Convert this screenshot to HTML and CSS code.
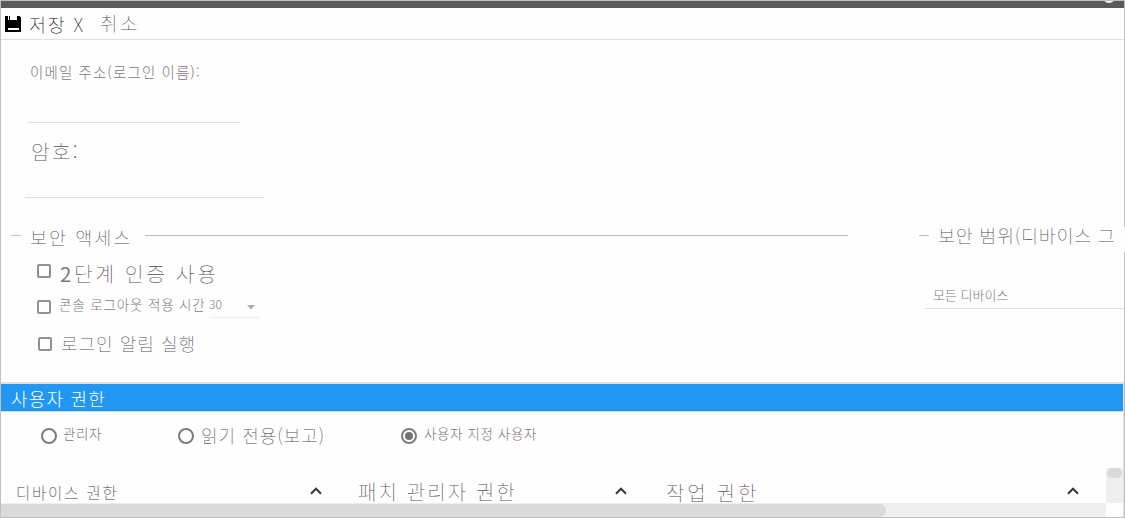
FILE: index.html
```html
<!DOCTYPE html>
<html lang="ko">
<head>
<meta charset="utf-8">
<title>사용자 권한</title>
<link rel="stylesheet" href="styles.css">
</head>
<body>
<div class="window">
  <header class="titlebar"><span class="avatar"></span></header>
  <nav class="toolbar">
    <svg class="save-icon" width="16" height="16" viewBox="0 0 16 16" shape-rendering="crispEdges"><path fill="#000" d="M0 0h3v4h9V0h2l2 2v14H0z"/><path fill="#000" d="M4 0h1v4H4z"/><path fill="#fff" d="M3 12h11v2H3z"/></svg>
    <span class="text save">저장 X</span>
    <span class="text cancel">취소</span>
  </nav>
  <section class="account">
    <div class="field email"><label class="text">이메일 주소(로그인 이름):</label></div>
    <div class="field password"><label class="text">암호:</label></div>
  </section>
  <section class="security">
    <div class="access">
      <div class="legend"><span class="text">보안 액세스</span></div>
      <div class="option two-step"><i class="checkbox"></i><span class="text"><b>2</b>단계 인증 사용</span></div>
      <div class="option logout"><i class="checkbox"></i><span class="text">콘솔 로그아웃 적용 시간</span>
        <div class="select"><span class="text">30</span><svg width="8" height="5" viewBox="0 0 8 5"><path fill="#adadad" d="M0 0h8L4 4.5z"/></svg></div>
      </div>
      <div class="option notify"><i class="checkbox"></i><span class="text">로그인 알림 실행</span></div>
    </div>
    <div class="scope">
      <div class="legend"><span class="text">보안 범위(디바이스 그</span></div>
      <div class="device-select"><span class="text">모든 디바이스</span></div>
    </div>
  </section>
  <section class="permissions">
    <h2 class="banner"><span class="text">사용자 권한</span></h2>
    <div class="roles">
      <div class="role admin"><i class="radio"></i><span class="text">관리자</span></div>
      <div class="role reader"><i class="radio"></i><span class="text">읽기 전용(보고)</span></div>
      <div class="role custom"><i class="radio checked"></i><span class="text">사용자 지정 사용자</span></div>
    </div>
    <div class="panels">
      <div class="panel device"><span class="text">디바이스 권한</span><svg class="chevron" width="12" height="8" viewBox="0 0 12 8"><path d="M1 6.7 6 1.7l5 5"/></svg></div>
      <div class="panel patch"><span class="text">패치 관리자 권한</span><svg class="chevron" width="12" height="8" viewBox="0 0 12 8"><path d="M1 6.7 6 1.7l5 5"/></svg></div>
      <div class="panel job"><span class="text">작업 권한</span><svg class="chevron" width="12" height="8" viewBox="0 0 12 8"><path d="M1 6.7 6 1.7l5 5"/></svg></div>
      <div class="vscroll"><i></i></div>
    </div>
    <div class="hscroll"><i></i></div>
  </section>
</div>
</body>
</html>
```
FILE: styles.css
```css
* { box-sizing: border-box; }
body { margin: 0; background: #fff; }
.window {
  position: relative;
  width: 1125px;
  height: 518px;
  border: 1px solid #c0c0c0;
  background: #fefefe;
  overflow: hidden;
  overflow: clip;
  overflow-clip-margin: 1px;
  color: #544d54;
}
/* Gap in the frame beside the scope heading */
.window::after {
  content: "";
  position: absolute;
  top: 226px;
  right: -1px;
  width: 1px;
  height: 25px;
  background: #fefefe;
}
.text {
  display: block;
  flex: none;
  font-family: "Noto Sans CJK KR", sans-serif;
  font-weight: 100;
  line-height: 20px;
  white-space: nowrap;
}
.text b { font-weight: 400; color: #7d767d; }

.titlebar { height: 7px; background: #5a5a5a; overflow: hidden; display: flex; justify-content: flex-end; padding-right: 8px; }
.avatar { width: 14px; height: 14px; margin-top: -12px; border: 2px solid #eee; border-radius: 50%; background: #999; }

.toolbar { display: flex; height: 32px; padding: 6px 0 0 4px; border-bottom: 1px solid #e0e0e0; }
.save-icon { flex: none; margin-top: 2px; }
.save { width: 71px; padding-left: 8px; font-size: 18.5px; letter-spacing: 1.8px; color: #000; }
.cancel { margin: -1px 0 0 8px; font-size: 19px; letter-spacing: 2.6px; }

.account { height: 185px; padding-top: 22px; }
.field { display: flex; align-items: flex-start; border-bottom: 1px solid #e0e0e0; }
.email { width: 212px; height: 61px; margin-left: 27px; padding-left: 2px; font-size: 14.5px; letter-spacing: 1.1px; }
.password { width: 239px; height: 75px; margin-left: 24px; padding: 18px 0 0 6px; font-size: 20.5px; letter-spacing: 2px; }

.security { display: flex; height: 157px; }
.legend { display: flex; align-items: center; height: 20px; }
.legend::before { content: ""; flex: none; width: 10px; height: 1px; background: #bdbdbd; }
.access { width: 838px; margin-left: 10px; }
.access .legend::after { content: ""; flex: none; width: 703px; height: 1px; margin-left: auto; background: #bdbdbd; }
.access .legend .text { margin: 3px 0 0 9px; font-size: 18.5px; letter-spacing: 2px; }
.option { display: flex; }
.checkbox { flex: none; width: 14px; height: 14px; border: 2px solid #919191; border-radius: 2px; }
.two-step { height: 37px; padding: 19px 0 0 26px; font-size: 20.5px; letter-spacing: 2.5px; }
.two-step .text { margin: -1px 0 0 9px; }
.logout { height: 36px; padding: 18px 0 0 26px; font-size: 13.5px; letter-spacing: .85px; }
.logout > .text { width: 149px; margin: -6px 0 0 8px; }
.select { display: flex; justify-content: space-between; width: 50px; height: 25px; margin: -7px 0 0 2px; border-bottom: 1px solid #eee; }
.select .text { margin: 1px 0 0 -1px; font-size: 12px; letter-spacing: 0; }
.select svg { margin: 12px 5px 0 0; }
.notify { padding: 19px 0 0 27px; font-size: 18px; letter-spacing: 1px; }
.notify .text { margin: -4px 0 0 9px; }
.scope { width: 205px; margin-left: 71px; }
.scope .legend .text { margin-left: 9px; font-size: 18.5px; letter-spacing: .7px; }
.device-select { width: 199px; height: 24px; margin: 40px 0 0 6px; padding-left: 8px; border-bottom: 1px solid #e0e0e0; font-size: 13px; }

.email .text, .logout .text, .device-select .text, .admin .text, .custom .text, .device .text { font-weight: 300; color: #7d767d; }

.permissions { border-top: 2px solid #e0e0e0; border-right: 1px solid #e0e0e0; }
.banner { height: 28px; margin: 0; padding: 4px 0 0 10px; border-bottom: 1px solid #d9dde0; background: #2196f3; color: #fff; font-size: 18px; letter-spacing: 1.2px; }
.banner .text { font-weight: 300; }
.roles { display: grid; grid-template-columns: 137px 223px 1fr; height: 56px; padding: 12px 0 0 40px; }
.role { display: flex; }
.radio { display: grid; place-items: center; flex: none; width: 16px; height: 16px; margin-top: 4px; border: 2px solid #7c7c7c; border-radius: 50%; }
.radio.checked::after { content: ""; width: 8px; height: 8px; border-radius: 50%; background: #747474; }
.role .text { margin-left: 6px; }
.admin, .custom { font-size: 13.5px; letter-spacing: .6px; }
.admin .text { margin-top: -1px; }
.custom .text { margin: -1px 0 0 7px; }
.reader { font-size: 18px; letter-spacing: 1px; }
.reader .text { margin: 1px 0 0 7px; }

.panels { display: grid; grid-template-columns: 321px 305px 452px 27px 17px; height: 35px; }
.panel { display: flex; justify-content: space-between; padding-top: 14px; }
.chevron { flex: none; margin-top: 5px; fill: none; stroke: #383838; stroke-width: 2; }
.device { padding-left: 15px; font-size: 15.5px; letter-spacing: 1.8px; }
.patch { padding-left: 36px; font-size: 20px; letter-spacing: 2.1px; }
.job { padding-left: 39px; font-size: 20px; letter-spacing: 2.8px; }
.job .text { margin-top: 1px; }
.vscroll { grid-column: 5; padding: 0 1px; background: #efefef; }
.vscroll i { display: block; height: 10px; border-radius: 5px; background: #d9d9d9; }
.hscroll { width: 1105px; height: 14px; padding-top: 1px; background: #efefef; }
.hscroll i { display: block; width: 885px; height: 13px; border-radius: 0 7px 7px 0; background: #dadada; }
```
